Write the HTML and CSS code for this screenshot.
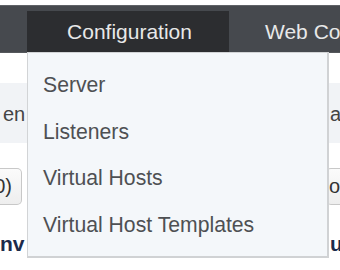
FILE: index.html
```html
<!DOCTYPE html>
<html>
<head>
<meta charset="utf-8">
<link rel="stylesheet" href="styles.css">
</head>
<body>
<div class="page">
  <div class="topgap"></div>
  <nav class="nav">
    <div class="nav-lead"></div>
    <div class="tab active">Configuration</div>
    <div class="tab">Web Console</div>
  </nav>
  <div class="content">
    <div class="band">
      <span class="frag">en</span>
      <span class="frag right">a</span>
    </div>
    <div class="btnrow">
      <span class="btn left"><span class="btxt">0)</span></span>
      <span class="btn right">o</span>
    </div>
    <div class="heading">
      <span>nv</span>
      <span class="hright">u</span>
    </div>
  </div>
  <ul class="dropdown">
    <li>Server</li>
    <li>Listeners</li>
    <li>Virtual Hosts</li>
    <li>Virtual Host Templates</li>
  </ul>
</div>
</body>
</html>
```

FILE: styles.css
```css
html, body {
  margin: 0;
  padding: 0;
  background: #ffffff;
}
body {
  font-family: "Liberation Sans", Arial, sans-serif;
  overflow: hidden;
  width: 340px;
  height: 270px;
}
.page {
  position: relative;
  width: 340px;
  height: 270px;
  overflow: hidden;
}
.topgap {
  height: 5px;
  background: #ffffff;
}
.nav {
  display: flex;
  align-items: flex-end;
  height: 46px;
  background: #46494e;
  border-top: 1px solid #5f6267;
  border-bottom: 1px solid #55585c;
  box-sizing: content-box;
  white-space: nowrap;
  overflow: hidden;
}
.nav-lead {
  width: 27px;
  flex: none;
}
.tab {
  flex: none;
  height: 41px;
  display: flex;
  align-items: center;
  font-size: 21px;
  color: #e8e8e8;
  padding: 0 0 0 36px;
}
.tab.active {
  width: 202px;
  box-sizing: border-box;
  padding: 0 0 0 3px;
  justify-content: center;
  background: #2c2d30;
}
.content {
  font-size: 19px;
  color: #333;
}
.band {
  margin-top: 30px;
  height: 60px;
  background: #f1f3f6;
  display: flex;
  justify-content: space-between;
  align-items: center;
  white-space: nowrap;
  overflow: hidden;
}
.frag {
  padding-left: 3px;
  padding-top: 2px;
  color: #444;
  font-size: 20px;
}
.frag.right {
  padding-left: 0;
  width: 10px;
  overflow: hidden;
}
.btnrow {
  margin-top: 25px;
  height: 37px;
  display: flex;
  justify-content: space-between;
}
.btn {
  box-sizing: border-box;
  height: 37px;
  display: flex;
  align-items: center;
  background: linear-gradient(#fbfbfb, #eeeeee);
  border: 1px solid #c8c8c8;
  color: #333;
  font-size: 20px;
  overflow: hidden;
  white-space: nowrap;
}
.btn.left {
  width: 22px;
  border-left: none;
  border-radius: 0 5px 5px 0;
  justify-content: flex-end;
  padding-right: 9px;
}
.btxt {
  flex: none;
}
.btn.right {
  width: 14px;
  border-right: none;
  border-radius: 5px 0 0 5px;
  padding-left: 2px;
}
.heading {
  margin-top: 27px;
  display: flex;
  justify-content: space-between;
  font-weight: bold;
  font-size: 21px;
  color: #1c2b4b;
  white-space: nowrap;
}
.hright {
  width: 10px;
  overflow: hidden;
}
.dropdown {
  position: absolute;
  left: 27px;
  top: 52px;
  width: 302px;
  height: 206px;
  box-sizing: border-box;
  margin: 0;
  padding: 9px 0 11px;
  list-style: none;
  background: #f4f7fa;
  border: 1px solid #d2d4d6;
  border-right: 2px solid #d0d2d4;
  border-bottom: 2px solid #d0d2d4;
}
.dropdown li {
  height: 46.5px;
  display: flex;
  align-items: center;
  padding-left: 15px;
  font-size: 21.2px;
  color: #4e5053;
  white-space: nowrap;
}
```
